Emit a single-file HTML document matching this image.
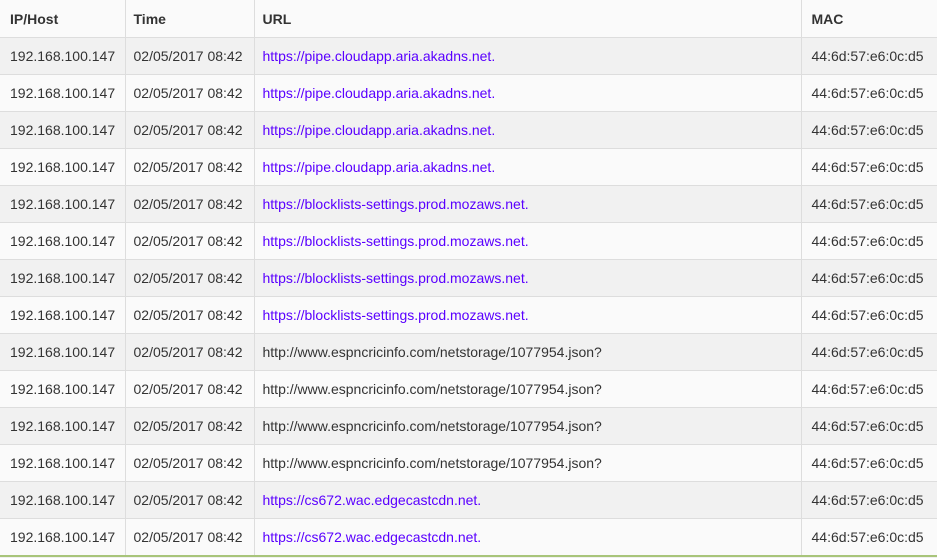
<!DOCTYPE html>
<html><head><style>
body{margin:0;width:937px;height:558px;overflow:hidden;background:#fff;font-family:"Liberation Sans",Arial,sans-serif;font-size:14px;color:#333}
table{border-collapse:collapse;width:937px;table-layout:fixed}
td,th{height:36px;padding:0 8px;border:1px solid #ddd;text-align:left;white-space:nowrap;overflow:hidden;box-sizing:border-box}
th{font-weight:bold;height:37px;background:#fafafa;border-top:0;padding-top:2px}
tr:nth-child(even) td{background:#f1f1f1}
tr:nth-child(odd) td{background:#fafafa}
td:first-child,th:first-child{border-left:0;padding-left:10px}
td:last-child,th:last-child{border-right:0;padding-left:10px}
tr td{height:37px}
a{color:#5a00ff;text-decoration:none}
.g{position:absolute;left:0;top:555px;width:937px;height:3px;background:#f0f0f0;border-top:2px solid #a8c47a;box-sizing:border-box}
</style></head><body>
<table>
<colgroup><col style="width:125px"><col style="width:129px"><col style="width:547px"><col style="width:136px"></colgroup>
<tr><th>IP/Host</th><th>Time</th><th>URL</th><th>MAC</th></tr>
<tr><td>192.168.100.147</td><td>02/05/2017 08:42</td><td><a>https://pipe.cloudapp.aria.akadns.net.</a></td><td>44:6d:57:e6:0c:d5</td></tr>
<tr><td>192.168.100.147</td><td>02/05/2017 08:42</td><td><a>https://pipe.cloudapp.aria.akadns.net.</a></td><td>44:6d:57:e6:0c:d5</td></tr>
<tr><td>192.168.100.147</td><td>02/05/2017 08:42</td><td><a>https://pipe.cloudapp.aria.akadns.net.</a></td><td>44:6d:57:e6:0c:d5</td></tr>
<tr><td>192.168.100.147</td><td>02/05/2017 08:42</td><td><a>https://pipe.cloudapp.aria.akadns.net.</a></td><td>44:6d:57:e6:0c:d5</td></tr>
<tr><td>192.168.100.147</td><td>02/05/2017 08:42</td><td><a>https://blocklists-settings.prod.mozaws.net.</a></td><td>44:6d:57:e6:0c:d5</td></tr>
<tr><td>192.168.100.147</td><td>02/05/2017 08:42</td><td><a>https://blocklists-settings.prod.mozaws.net.</a></td><td>44:6d:57:e6:0c:d5</td></tr>
<tr><td>192.168.100.147</td><td>02/05/2017 08:42</td><td><a>https://blocklists-settings.prod.mozaws.net.</a></td><td>44:6d:57:e6:0c:d5</td></tr>
<tr><td>192.168.100.147</td><td>02/05/2017 08:42</td><td><a>https://blocklists-settings.prod.mozaws.net.</a></td><td>44:6d:57:e6:0c:d5</td></tr>
<tr><td>192.168.100.147</td><td>02/05/2017 08:42</td><td>http://www.espncricinfo.com/netstorage/1077954.json?</td><td>44:6d:57:e6:0c:d5</td></tr>
<tr><td>192.168.100.147</td><td>02/05/2017 08:42</td><td>http://www.espncricinfo.com/netstorage/1077954.json?</td><td>44:6d:57:e6:0c:d5</td></tr>
<tr><td>192.168.100.147</td><td>02/05/2017 08:42</td><td>http://www.espncricinfo.com/netstorage/1077954.json?</td><td>44:6d:57:e6:0c:d5</td></tr>
<tr><td>192.168.100.147</td><td>02/05/2017 08:42</td><td>http://www.espncricinfo.com/netstorage/1077954.json?</td><td>44:6d:57:e6:0c:d5</td></tr>
<tr><td>192.168.100.147</td><td>02/05/2017 08:42</td><td><a>https://cs672.wac.edgecastcdn.net.</a></td><td>44:6d:57:e6:0c:d5</td></tr>
<tr><td>192.168.100.147</td><td>02/05/2017 08:42</td><td><a>https://cs672.wac.edgecastcdn.net.</a></td><td>44:6d:57:e6:0c:d5</td></tr>
</table>
<div class="g"></div>
</body></html>
